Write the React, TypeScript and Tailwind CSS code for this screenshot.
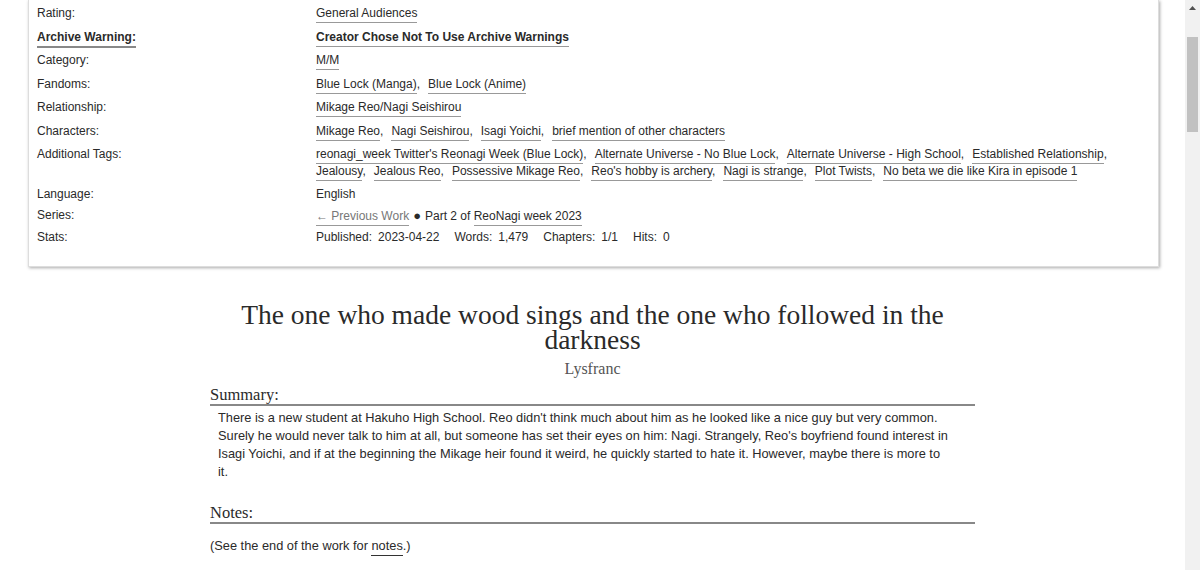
import React from "react";

const sans = { fontFamily: '"Liberation Sans", Arial, sans-serif' };
const serif = { fontFamily: '"Liberation Serif", "Times New Roman", serif' };

type Row = { label: string; strong?: boolean; tags?: string[]; bold?: boolean; node?: React.ReactNode; gap?: string };

const Tag = ({ text, bold, last }: { text: string; bold?: boolean; last?: boolean }) => (
  <span className="whitespace-nowrap">
    <a className={`border-b border-[#999] pb-[2px] ${bold ? "font-bold" : ""}`}>{text}</a>
    {!last && ","}
  </span>
);

const TagList = ({ tags, bold }: { tags: string[]; bold?: boolean }) => (
  <div className="flex flex-wrap gap-x-[8px]">
    {tags.map((t, i) => (
      <Tag key={t} text={t} bold={bold} last={i === tags.length - 1} />
    ))}
  </div>
);

const rows: Row[] = [
  { label: "Rating:", tags: ["General Audiences"] },
  { label: "Archive Warning:", strong: true, bold: true, tags: ["Creator Chose Not To Use Archive Warnings"] },
  { label: "Category:", tags: ["M/M"] },
  { label: "Fandoms:", tags: ["Blue Lock (Manga)", "Blue Lock (Anime)"] },
  { label: "Relationship:", tags: ["Mikage Reo/Nagi Seishirou"] },
  { label: "Characters:", tags: ["Mikage Reo", "Nagi Seishirou", "Isagi Yoichi", "brief mention of other characters"] },
  {
    label: "Additional Tags:",
    gap: "mb-[5.5px]",
    tags: [
      "reonagi_week Twitter's Reonagi Week (Blue Lock)",
      "Alternate Universe - No Blue Lock",
      "Alternate Universe - High School",
      "Established Relationship",
      "Jealousy",
      "Jealous Reo",
      "Possessive Mikage Reo",
      "Reo's hobby is archery",
      "Nagi is strange",
      "Plot Twists",
      "No beta we die like Kira in episode 1",
    ],
  },
  { label: "Language:", gap: "mb-[4px]", node: <span>English</span> },
  {
    label: "Series:",
    gap: "mb-[4.5px]",
    node: (
      <span>
        <a className="border-b border-[#999] pb-[2px] text-[#777]">← Previous Work</a>
        <span className="mx-[4px] text-[13px]">●</span>
        Part 2 of <a className="border-b border-[#999] pb-[2px]">ReoNagi week 2023</a>
      </span>
    ),
  },
  {
    label: "Stats:",
    node: (
      <div className="flex gap-x-[15px]">
        {[
          ["Published:", "2023-04-22"],
          ["Words:", "1,479"],
          ["Chapters:", "1/1"],
          ["Hits:", "0"],
        ].map(([k, v]) => (
          <span key={k} className="flex gap-x-[6px]">
            <span>{k}</span>
            <span>{v}</span>
          </span>
        ))}
      </div>
    ),
  },
];

export default function App() {
  return (
    <div className="flex h-[570px] overflow-hidden bg-white text-[#2a2a2a]" style={sans}>
      <div className="flex-1">
        {/* work meta */}
        <div className="ml-[28px] mr-[26px] border border-t-0 border-[#ddd] bg-white px-[8px] pt-[5px] pb-[13px] shadow-[1px_1px_3px_#aaa]">
          <dl className="grid grid-cols-[279px_1fr] text-[12px] leading-[17px]">
            {rows.map((r) => (
              <React.Fragment key={r.label}>
                <dt className={r.gap ?? "mb-[6.5px]"}>
                  {r.strong ? (
                    <span className="border-b-2 border-[#888] pb-[2px] font-bold">{r.label}</span>
                  ) : (
                    r.label
                  )}
                </dt>
                <dd className={`${r.gap ?? "mb-[6.5px]"} pr-[20px]`}>
                  {r.tags ? <TagList tags={r.tags} bold={r.bold} /> : r.node}
                </dd>
              </React.Fragment>
            ))}
          </dl>
        </div>

        {/* preface */}
        <div className="mx-auto mt-[35px] w-[765px]">
          <h2 className="text-center text-[27.5px] leading-[25px] text-[#2a2a2a]" style={serif}>
            The one who made wood sings and the one who followed in the darkness
          </h2>
          <h3 className="mt-[5px] text-center text-[16px] text-[#555]" style={serif}>
            Lysfranc
          </h3>
          <h3 className="mt-[4px] border-b-2 border-[#888] text-[16.5px] leading-[19px]" style={serif}>
            Summary:
          </h3>
          <p className="mt-[3px] pl-[8px] pr-[24px] text-[12.8px] leading-[18px]">
            There is a new student at Hakuho High School. Reo didn't think much about him as he looked like a nice guy
            but very common. Surely he would never talk to him at all, but someone has set their eyes on him: Nagi.
            Strangely, Reo's boyfriend found interest in Isagi Yoichi, and if at the beginning the Mikage heir found it
            weird, he quickly started to hate it. However, maybe there is more to it.
          </p>
          <h3 className="mt-[22px] border-b-2 border-[#888] text-[16.5px] leading-[19px]" style={serif}>
            Notes:
          </h3>
          <p className="mt-[13px] text-[12.8px] leading-[18px]">
            (See the end of the work for <a className="border-b border-[#333] pb-[2px]">notes</a>.)
          </p>
        </div>
      </div>

      {/* scrollbar */}
      <div className="flex w-[15px] flex-col bg-[#f1f1f1]">
        <div className="flex h-[15px] items-center justify-center">
          <svg width="7" height="4" viewBox="0 0 7 4">
            <path d="M3.5 0L7 4H0z" fill="#505050" />
          </svg>
        </div>
        <div className="mx-[2px] mt-[22px] h-[95px] bg-[#c1c1c1]" />
      </div>
    </div>
  );
}
